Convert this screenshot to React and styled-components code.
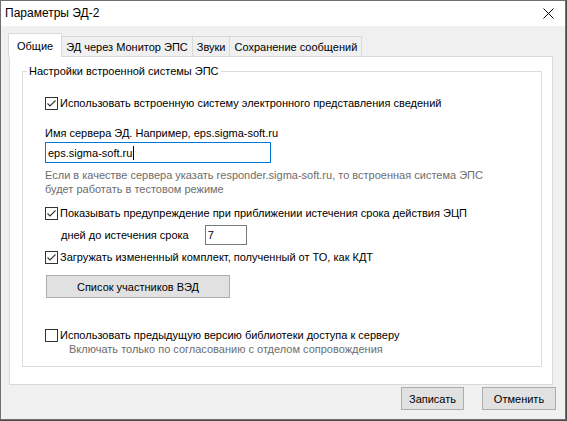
import React from 'react'
import styled, { createGlobalStyle } from 'styled-components'

const GlobalStyle = createGlobalStyle`
  html, body {
    margin: 0;
    padding: 0;
    background: #4a4a4a;
  }
  body {
    font-family: "Liberation Sans", Arial, sans-serif;
    font-size: 11px;
    color: #000;
  }
`

const Window = styled.div`
  width: 566px;
  height: 420px;
  box-sizing: border-box;
  border: 1px solid #707070;
  background: #f0f0f0;
  display: flex;
  flex-direction: column;
`

const TitleBar = styled.div`
  height: 25px;
  flex-shrink: 0;
  background: #fff;
  display: flex;
  align-items: center;
  justify-content: space-between;
  padding: 0 11px 0 4px;
`

const Title = styled.span`
  font-size: 12px;
  line-height: 15px;
`

const CloseIcon = () => (
  <svg width="11" height="11" viewBox="0 0 11 11">
    <path d="M0.5 0.5 L10.5 10.5 M10.5 0.5 L0.5 10.5" stroke="#000" strokeWidth="1" fill="none" />
  </svg>
)

const Body = styled.div`
  flex: 1;
  padding: 7px 12px 0 7px;
  display: flex;
  flex-direction: column;
`

const TabsRow = styled.div`
  display: flex;
  align-items: flex-end;
  height: 24px;
  position: relative;
  z-index: 1;
`

const Tab = styled.div`
  box-sizing: border-box;
  height: ${(p) => (p.active ? '24px' : '20px')};
  margin-bottom: ${(p) => (p.active ? '0' : '1px')};
  padding: 0 ${(p) => (p.active ? '8px' : '4px')};
  margin-left: ${(p) => (p.first ? '0' : '-1px')};
  border: 1px solid #d9d9d9;
  border-bottom: none;
  background: ${(p) => (p.active ? '#fff' : '#f0f0f0')};
  display: flex;
  align-items: center;
  padding-top: ${(p) => (p.active ? '0' : '1px')};
  white-space: nowrap;
`

const Panel = styled.div`
  box-sizing: border-box;
  width: 544px;
  height: 329px;
  margin: -1px 0 0 1px;
  background: #fff;
  border: 1px solid #d9d9d9;
  padding: 14px 0 0 12px;
`

const GroupBox = styled.div`
  position: relative;
  box-sizing: border-box;
  width: 520px;
  height: 296px;
  border: 1px solid #dcdcdc;
  padding: 24px 0 0 22px;
  display: flex;
  flex-direction: column;
  align-items: flex-start;
`

const Legend = styled.span`
  position: absolute;
  top: -8px;
  left: 4px;
  padding: 0 2px;
  background: #fff;
  line-height: 15px;
`

const CheckRow = styled.label`
  display: flex;
  align-items: center;
  height: 15px;
  line-height: 15px;
  margin-top: ${(p) => p.mt || 0}px;
  white-space: nowrap;
`

const Box = styled.span`
  box-sizing: border-box;
  width: 13px;
  height: 13px;
  border: 1px solid #333;
  background: #fff;
  margin-right: 2px;
  display: flex;
  align-items: center;
  justify-content: center;
  flex-shrink: 0;
`

const Check = ({ checked }) => (
  <Box>
    {checked && (
      <svg width="11" height="11" viewBox="0 0 11 11">
        <polyline points="1.5,5.5 4,8 9.5,2.5" fill="none" stroke="#333" strokeWidth="1.1" />
      </svg>
    )}
  </Box>
)

const Text = styled.div`
  line-height: 15px;
  margin-top: ${(p) => p.mt || 0}px;
  margin-left: ${(p) => p.ml || 0}px;
  white-space: nowrap;
`

const Hint = styled.div`
  color: #6d6d6d;
  line-height: 14px;
  margin-top: ${(p) => p.mt || 0}px;
  margin-left: ${(p) => p.ml || 0}px;
  white-space: nowrap;
`

const Input = styled.div`
  box-sizing: border-box;
  width: ${(p) => p.w}px;
  height: ${(p) => p.h}px;
  margin-top: ${(p) => p.mt || 0}px;
  border: 1px solid ${(p) => (p.focused ? '#0078d7' : '#7a7a7a')};
  background: #fff;
  display: flex;
  align-items: center;
  padding-left: 2px;
`

const Caret = styled.span`
  display: inline-block;
  width: 1px;
  height: 14px;
  background: #000;
  margin-left: 1px;
`

const DaysRow = styled.div`
  display: flex;
  align-items: center;
  margin-top: 4px;
  padding-left: 16px;
  gap: 16px;
`

const Button = styled.div`
  box-sizing: border-box;
  width: ${(p) => p.w}px;
  height: 23px;
  margin-top: ${(p) => p.mt || 0}px;
  margin-left: ${(p) => p.ml || 0}px;
  background: #e1e1e1;
  border: 1px solid #adadad;
  display: flex;
  align-items: center;
  justify-content: center;
`

const Footer = styled.div`
  display: flex;
  justify-content: flex-end;
  gap: 18px;
  margin-top: 2px;
  margin-right: -3px;
`

export default function App() {
  return (
    <>
      <GlobalStyle />
      <Window>
        <TitleBar>
          <Title>Параметры ЭД-2</Title>
          <CloseIcon />
        </TitleBar>
        <Body>
          <TabsRow>
            <Tab active first>Общие</Tab>
            <Tab>ЭД через Монитор ЭПС</Tab>
            <Tab>Звуки</Tab>
            <Tab>Сохранение сообщений</Tab>
          </TabsRow>
          <Panel>
            <GroupBox>
              <Legend>Настройки встроенной системы ЭПС</Legend>
              <CheckRow>
                <Check checked />
                Использовать встроенную систему электронного представления сведений
              </CheckRow>
              <Text mt={15}>Имя сервера ЭД. Например, eps.sigma-soft.ru</Text>
              <Input focused w={226} h={21} mt={1}>
                eps.sigma-soft.ru<Caret />
              </Input>
              <Hint mt={5}>
                Если в качестве сервера указать responder.sigma-soft.ru, то встроенная система ЭПС
                <br />
                будет работать в тестовом режиме
              </Hint>
              <CheckRow mt={10}>
                <Check checked />
                Показывать предупреждение при приближении истечения срока действия ЭЦП
              </CheckRow>
              <DaysRow>
                <span>дней до истечения срока</span>
                <Input w={42} h={20}>7</Input>
              </DaysRow>
              <CheckRow mt={5}>
                <Check checked />
                Загружать измененный комплект, полученный от ТО, как КДТ
              </CheckRow>
              <Button w={184} mt={10} ml={1}>Список участников ВЭД</Button>
              <CheckRow mt={30}>
                <Check />
                Использовать предыдущую версию библиотеки доступа к серверу
              </CheckRow>
              <Hint mt={-1} ml={24}>Включать только по согласованию с отделом сопровождения</Hint>
            </GroupBox>
          </Panel>
          <Footer>
            <Button w={63}>Записать</Button>
            <Button w={74}>Отменить</Button>
          </Footer>
        </Body>
      </Window>
    </>
  )
}
